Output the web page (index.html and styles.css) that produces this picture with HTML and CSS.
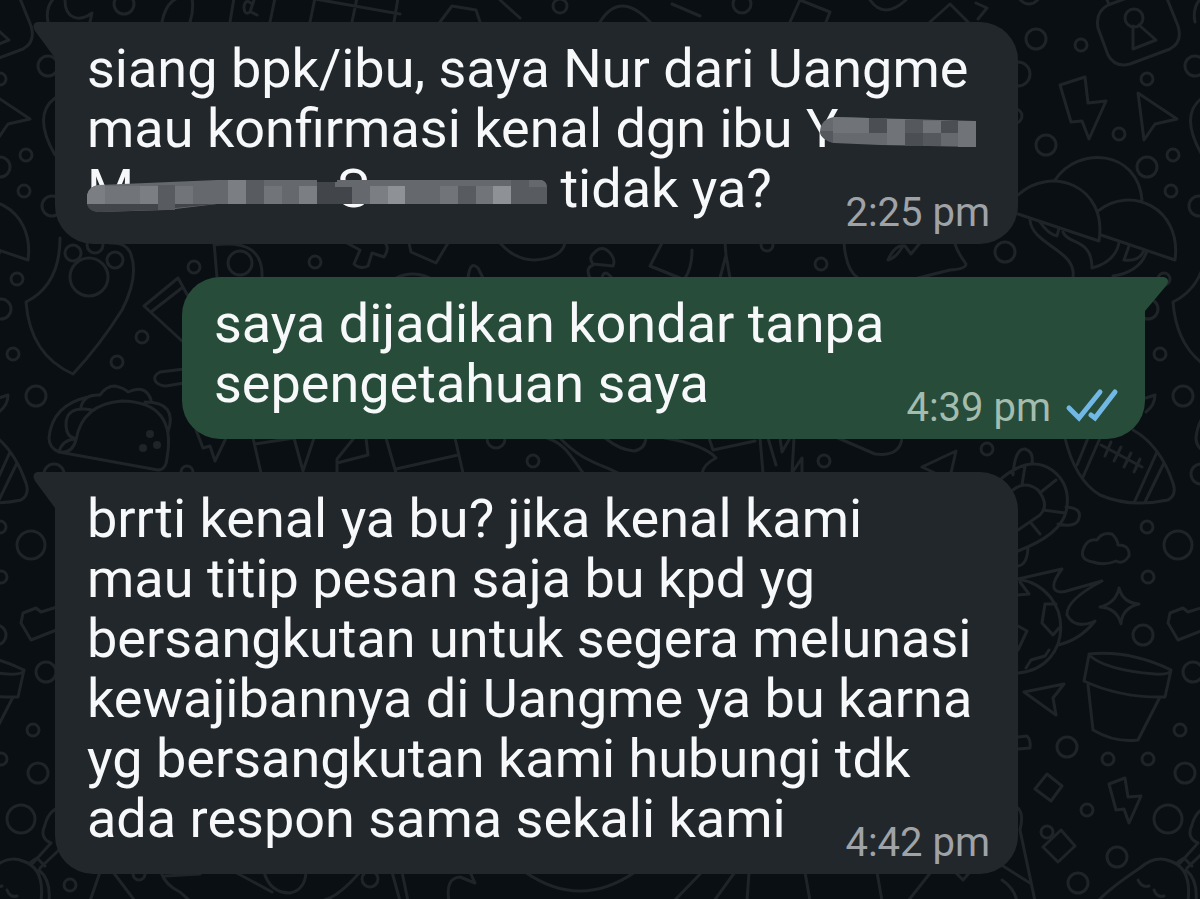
FILE: index.html
```
<!DOCTYPE html>
<html lang="id">
<head>
    <meta charset="UTF-8">
    <meta name="viewport" content="width=device-width, initial-scale=1.0">
    <title>Chat</title>
    <link rel="stylesheet" href="styles.css">
</head>
<body>
    <!-- Wallpaper doodles, repeated every 1147px -->
    <svg class="wallpaper" aria-hidden="true">
        <g id="doodles">
            <!-- Bubbles -->
            <circle cx="1036" cy="39" r="10"/><circle cx="1081" cy="45" r="6"/><circle cx="1029" cy="-7" r="11"/>
            <circle cx="1018" cy="74" r="12"/><circle cx="1015" cy="116" r="7"/><circle cx="1046" cy="145" r="10"/>
            <circle cx="1119" cy="134" r="6"/><circle cx="1147" cy="79" r="6"/><circle cx="1195" cy="66" r="10"/>
            <circle cx="1147" cy="167" r="10"/><circle cx="1173" cy="155" r="6"/><circle cx="1171" cy="191" r="6"/>
            <circle cx="1199" cy="206" r="10"/><circle cx="1005" cy="252" r="10"/>
            <circle cx="17" cy="279" r="6"/><circle cx="1" cy="309" r="10"/><circle cx="13" cy="354" r="6"/>
            <circle cx="36" cy="396" r="10"/><circle cx="142" cy="337" r="6"/><circle cx="117" cy="362" r="6"/>
            <circle cx="194" cy="267" r="6"/><circle cx="54" cy="474" r="10"/><circle cx="187" cy="472" r="6"/>
            <circle cx="124" cy="4" r="10"/><circle cx="315" cy="262" r="6"/><circle cx="767" cy="245" r="6"/>
            <circle cx="821" cy="264" r="6"/><circle cx="496" cy="439" r="9"/><circle cx="533" cy="461" r="6"/>
            <circle cx="824" cy="461" r="6"/><circle cx="987" cy="449" r="6"/><circle cx="1147" cy="527" r="6"/>
            <circle cx="1178" cy="545" r="14"/><circle cx="1148" cy="577" r="6"/><circle cx="1143" cy="635" r="10"/>
            <circle cx="1193" cy="672" r="10"/><circle cx="1180" cy="730" r="6"/><circle cx="1067" cy="747" r="10"/>
            <circle cx="1108" cy="759" r="6"/><circle cx="1148" cy="759" r="6"/><circle cx="1185" cy="773" r="10"/>
            <circle cx="1087" cy="810" r="6"/><circle cx="1168" cy="819" r="14"/><circle cx="1117" cy="857" r="10"/>
            <circle cx="1078" cy="883" r="10"/><circle cx="370" cy="879" r="8"/><circle cx="70" cy="885" r="6"/>
            <circle cx="139" cy="874" r="6"/><circle cx="560" cy="6" r="7"/><circle cx="742" cy="4" r="9"/>
            <!-- Lock -->
            <circle cx="1134" cy="18" r="9"/>
            <path d="M1133 26V49L1156 40L1139 25M1166-4L1178 26Q1183 42 1170 49L1130 64Q1115 68 1108 55L1098 28Q1095 12 1108 5L1127-2M1109 4L1104-6"/>
            <!-- Bolts and arrows -->
            <path d="M1060 85L1085 77L1088 103L1106 101L1089 139L1082 121L1071 122ZM1138 93L1177 119L1155 124L1144 140Z"/>
            <path d="M1109 784L1125 778L1128 797L1141 796L1129 823L1124 809L1116 810ZM1024 692L1064 684L1053 698L1056 715Z"/>
            <!-- Mushrooms -->
            <path d="M1055 180C1078 145 1138 150 1142 200M1018 195C1050 165 1108 185 1099 241L1018 214M1098 211C1130 185 1182 207 1175 260L1101 235"/>
            <path d="M1030 220C1032 245 1077 250 1073 277M1063 232C1068 245 1092 238 1092 268Q1115 262 1119 243M1040 222Q1048 234 1057 236L1059 228M1129 246L1124 260Q1140 262 1144 250M1147 251Q1140 272 1113 276"/>
            <!-- Shield -->
            <path d="M60 238Q60 285 26 302Q30 355 73 374Q100 345 122 310Q140 275 130 252Q125 242 110 243"/>
            <circle cx="73" cy="253" r="8"/><circle cx="95" cy="245" r="8"/><circle cx="115" cy="260" r="8"/><circle cx="89" cy="277" r="19"/>
            <path d="M55 98Q32 115 55 155"/>
            <!-- Slice and stick -->
            <path d="M178 278L144 306L182 341M178 278L188 296M183 287L151 312M184 369L160 372Q152 376 156 382Q160 386 166 386L184 383"/>
            <!-- Taco -->
            <path d="M59 452Q49 448 49 438Q52 405 88 397M81 407Q84 394 100 395Q106 386 115 386Q124 388 128 392Q146 384 151 400M59 452L158 470Q166 470 167 458Q177 402 122 401Q82 404 76 440Q72 454 59 452Q62 440 75 439M145 402Q178 402 168 432M92 410Q65 405 66 426Q67 437 74 438"/>
            <g class="filled"><circle cx="150" cy="434" r="4"/><circle cx="157" cy="445" r="4"/><circle cx="143" cy="448" r="4"/></g>
            <!-- Strip behind the top of the first message -->
            <path d="M48 22Q45 8 54-2M65-2C64 20 80 22 92 13L90 22M162 22Q168-8 192-2Q194 10 190 22M230 22L234-2M270 22L275-2M310 22L315-2M352 22L357-2M315-1L400 14M394 22L398-2M252 4Q246-2 244 6Q244 16 250 12L254 0M251 12L257 15"/>
            <path d="M440 22L452 6L476 10L480 22M500 0L520 18M600 22Q620-10 650 22M672 4L700 16M790 22L800 0L830 12L826 22M870 0Q884 20 906 0M930 22L950 4L968 22M978 19L987 8L976 3"/>
            <!-- Strip between first and second message -->
            <path d="M214 242L217 278M214 245Q264 238 262 278M347 243L360 250L354 264Q360 270 368 266L372 253L384 257Q390 248 385 243M409 243L411 252L436 263L448 243M500 243Q515 260 535 260Q562 258 565 243M468 278Q470 260 478 268L483 278M396 278Q412 270 430 278"/>
            <circle cx="240" cy="263" r="12"/>
            <path d="M594 253Q602 244 610 253Q616 260 613 266L593 264Q588 258 594 253M590 278Q585 268 593 265M602 278Q604 268 612 278M662 243L650 266L680 278M692 250Q692 268 685 278M725 243L726 255L720 278M726 255L730 278M844 243Q846 270 858 278M955 243Q956 250 966 264Q966 269 950 270L918 278M888 260Q895 244 905 246L911 254L920 243M888 260Q896 258 903 246"/>
            <!-- Strip between second and third message -->
            <path d="M196 430L203 448L210 446L215 461L226 438M253 438L261 473M255 444L294 438L303 471L314 438M354 438L337 459V473M337 463L368 455L366 438M386 438L396 473M396 469L458 455M455 438L463 473M547 438C565 444 570 455 583 473M560 438C580 460 600 464 618 473M605 438Q620 450 634 451Q645 449 646 438"/>
            <path d="M665 438Q705 445 716 458Q704 464 702 473M709 438L713 450L755 441M760 438L763 473M768 438L776 465M780 438L782 452L790 438M794 438L792 473L802 458V473M838 438L875 454Q900 457 902 438M935 473L922 467L956 451L951 473"/>
            <!-- Football -->
            <path d="M1065 438Q1075 480 1100 495Q1130 508 1168 500Q1177 495 1173 483Q1160 445 1133 430M1088 438L1077 465M1100 438L1083 477M1157 452L1134 503M1164 463L1145 502M1101 445L1142 467M1111 442L1105 456M1121 447L1114 461M1131 453L1124 467M1140 459L1134 472M1146 398L1155 395Q1155 405 1146 412"/>
            <!-- Turtle -->
            <path d="M1002 478Q1030 455 1052 470Q1072 485 1066 512Q1060 535 1018 551M1013 490Q1025 480 1038 490Q1050 505 1040 515L1018 530M1025 466L1022 485M1056 480L1041 492M1043 510L1065 513M1031 523L1040 534M1013 475Q1015 448 1025 449Q1034 452 1032 463M1066 507Q1082 508 1079 518Q1077 528 1058 524M1028 548Q1027 565 1018 566"/>
            <!-- Cloud and star -->
            <path d="M1093 562Q1080 560 1083 550Q1087 538 1097 540Q1102 532 1112 534Q1118 540 1118 545Q1130 545 1129 556Q1123 565 1116 561Q1105 566 1093 562Z"/>
            <path d="M1119 588Q1123 603 1139 604Q1122 608 1121 624Q1117 608 1100 607Q1116 603 1119 588Z"/>
            <!-- Flaming ball -->
            <path d="M1018 579C1075 588 1075 668 1018 673M1018 579L1062 569C1046 590 1056 595 1070 590L1102 581Q1066 600 1067 615Q1075 630 1095 621Q1080 640 1058 645M1056 604H1045L1042 623L1053 635L1059 628M1020 582L1029 594L1018 595M1018 626L1027 631L1018 650M1026 668L1031 660L1045 656L1049 650"/>
            <!-- Flower pot -->
            <path d="M1089 654Q1130 650 1171 670Q1170 675 1155 674Q1105 670 1089 655L1084 681Q1120 698 1165 697L1171 670M1088 685L1093 730Q1115 743 1138 740L1160 697"/>
            <!-- Diamond, tag, brick -->
            <path d="M1047 774L1062 786L1051 801L1035 789ZM1061 830L1075 846L1058 862L1043 847ZM1170 613L1183 608L1188 612L1207 606L1216 625L1178 640L1168 623ZM1018 737L1027 736Q1031 740 1030 748L1018 749"/>
            <circle cx="1047" cy="832" r="6"/>
            <!-- Pear -->
            <path d="M1098 901Q1110 888 1140 868Q1155 855 1170 861Q1192 868 1188 901M1180 863L1198 843M1187 868L1206 850M1178 862L1184 858L1192 866M1186 870Q1198 880 1196 901M1198 843Q1186 838 1192 825Q1196 808 1212 806M1138 880Q1142 888 1149 886M1154 890Q1157 898 1164 896"/>
            <!-- Strip below the last message -->
            <path d="M1018 808Q1024 814 1020 830L1035 901M1003 866L1030 883M1002 880Q1014 888 1017 901M235 872L272 892M264 872Q270 893 290 893Q305 890 306 872M360 872Q335 901 318 901M392 872L400 901M402 872L408 901M449 901Q445 878 460 877L475 883L470 872M525 872Q580 910 635 872"/>
            <path d="M702 872L674 901M735 872L714 901M749 872L747 901M805 872L810 901M877 872L882 901M931 872L908 901M955 872L963 880L970 872M100 872L90 901M113 872L135 901M161 872Q165 885 180 892L190 901M165 876L200 874"/>
        </g>
        <use href="#doodles" x="-1147"/>
        <use href="#doodles" x="1147"/>
    </svg>

    <main class="chat">
        <article class="message incoming">
            <p>siang bpk/ibu, saya Nur dari Uangme<br>
                mau konfirmasi kenal dgn ibu <span class="redacted first-name">Y<svg viewBox="0 0 156 30" role="img" aria-label="disensor">
                    <path fill="#66696d" d="M14 0L156 4V30L60 28L14 26Q0 22 0 14Q1 2 14 0Z"/>
                    <path fill="#707377" d="M13 0L49 1V16H13ZM67 2H85V28H67ZM103 4H121V16H103ZM138 4H156V30H138Z"/>
                    <path fill="#4b4e52" d="M49 1H67V16H49ZM85 16H103V29H85ZM121 4H138V16H121Z"/>
                    <path fill="#55585c" d="M0 14H13V26Q0 22 0 14ZM85 3H103V16H85ZM103 16H121V29H103Z"/>
                </svg></span><br>
                <span class="redacted last-name">M<span class="initial">S</span><svg viewBox="0 0 460 34" role="img" aria-label="disensor">
                    <path fill="#65686c" d="M12 6L130 1H230V3H250V1H455Q460 3 460 8V25H130L80 31L12 33Q0 32 0 22V16Q2 7 12 6Z"/>
                    <path fill="#7b7e82" d="M0 25V16Q2 7 12 6L18 6V25ZM53 7H71V25H53ZM141 1H159V25H141ZM212 7H230V25H212ZM283 7H301V25H283Z"/>
                    <path fill="#8e9195" d="M301 7H318V25H301ZM406 7H424V25H406Z"/>
                    <path fill="#717478" d="M18 7H53V25H18ZM88 7H106V25H88ZM177 7H195V25H177ZM353 7H371V25H353ZM389 7H406V25H389Z"/>
                    <path fill="#585b5f" d="M71 6H88V31H71ZM159 1H177V25H159ZM371 7H389V25H371ZM424 1H442V25H424ZM442 8H460V25H442Z"/>
                    <path fill="#42454a" d="M230 3H248V25H230ZM248 8H265V25H248ZM0 25H71V31L12 33Q1 32 0 25ZM88 25H130L88 29Z"/>
                </svg></span> tidak ya?</p>
            <footer><time datetime="14:25">2:25 pm</time></footer>
        </article>

        <article class="message outgoing">
            <p>saya dijadikan kondar tanpa<br>sepengetahuan saya</p>
            <footer>
                <time datetime="16:39">4:39 pm</time>
                <svg class="ticks" viewBox="0 0 52 34" role="img" aria-label="Dibaca">
                    <path d="M4 17L14 27L35 1M26 24L30 27L50 1"/>
                </svg>
            </footer>
        </article>

        <article class="message incoming">
            <p>brrti kenal ya bu? jika kenal kami<br>mau titip pesan saja bu kpd yg<br>bersangkutan untuk segera melunasi<br>kewajibannya di Uangme ya bu karna<br>yg bersangkutan kami hubungi tdk<br>ada respon sama sekali kami</p>
            <footer><time datetime="16:42">4:42 pm</time></footer>
        </article>
    </main>
</body>
</html>
```
FILE: styles.css
```
body {
    margin: 0;
    min-height: 100vh;
    background: #0a0f13;
    font-family: Roboto, 'Liberation Sans', sans-serif;
    color: #f7f8fa;
    position: relative;
    overflow-x: hidden;
}
.wallpaper {
    position: absolute;
    top: 0;
    left: 0;
    width: 100%;
    height: 100%;
    fill: none;
    stroke: #1f2428;
    stroke-width: 3;
    stroke-linejoin: round;
    stroke-linecap: round;
}
.wallpaper .filled {
    fill: #1f2428;
    stroke: none;
}
.chat {
    display: flex;
    flex-direction: column;
    gap: 33px;
    padding: 22px 55px 25px;
    position: relative;
}
.message {
    position: relative;
    padding: 17px 32px 25px;
    border-radius: 38px;
}
.message p {
    margin: 0;
    font-size: 54px;
    line-height: 60px;
    white-space: nowrap;
}
.incoming {
    background: #22272b;
    margin-right: 127px;
    border-top-left-radius: 0;
}
.outgoing {
    background: #274c3a;
    margin-left: 127px;
    border-top-right-radius: 0;
}

/* Bubble tails */
.message::before {
    content: "";
    position: absolute;
    top: 0;
    width: 24px;
    height: 36px;
    background: inherit;
}
.incoming::before {
    right: 100%;
    clip-path: path('M24 0H6Q0 2 4 9L24 36Z');
}
.outgoing::before {
    left: 100%;
    clip-path: path('M0 0H19Q26 2 21 9L0 34Z');
}

.message footer {
    position: absolute;
    right: 28px;
    bottom: 7px;
    display: flex;
    align-items: center;
    gap: 14px;
    font-size: 40px;
    line-height: 48px;
    color: #9fa3a7;
}
.outgoing footer {
    color: #a4bcae;
}
.ticks {
    width: 52px;
    height: 34px;
    overflow: visible;
    fill: none;
    stroke: #71b8e4;
    stroke-width: 5;
    stroke-linecap: round;
}

/* Censored names */
.redacted {
    position: relative;
    display: inline-block;
}
.redacted svg {
    position: absolute;
    left: 0;
    top: 20px;
    width: 460px;
    height: 34px;
}
.first-name svg {
    left: 14px;
    top: 18px;
    width: 156px;
    height: 30px;
}
.last-name {
    width: 460px;
}
.initial {
    position: absolute;
    left: 250px;
}
```
